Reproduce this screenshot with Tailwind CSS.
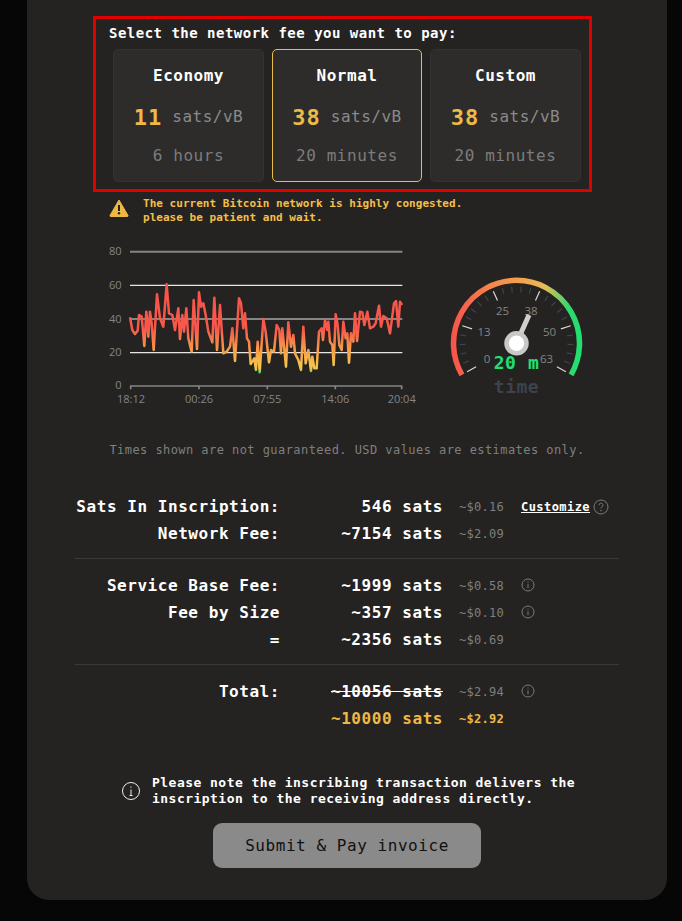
<!DOCTYPE html>
<html><head><meta charset="utf-8"><title>Fee</title>
<script src="https://cdn.jsdelivr.net/npm/@tailwindcss/browser@4"></script></head>
<body class="bg-[#060606] font-['DejaVu_Sans_Mono',monospace] overflow-hidden">
<div class="w-[682px] h-[921px] pl-[27px]">
<div class="w-[640px] h-[900px] bg-[#242322] rounded-b-[22px] pt-[16px] relative">

<div class="ml-[66px] w-[499px] h-[176px] border-[3px] border-[#e00000] pl-[14px] pt-[5px]">
  <p class="text-[14px] leading-[18px] font-bold tracking-[0.49px] text-white -ml-[1px]">Select the network fee you want to pay:</p>
  <div class="flex gap-[8px] mt-[7px] ml-[3px]">
    <div class="w-[151px] h-[133px] rounded-[5px] border border-[#333231] bg-[#2d2c2b] flex flex-col items-center pt-[16px]">
      <p class="text-[16px] leading-[20px] font-bold tracking-[0.5px] text-white">Economy</p>
      <p class="mt-[20px] flex items-center h-[22px] gap-[10px]"><span class="text-[22px] font-bold tracking-[1px] text-[#eeb945]">11</span><span class="text-[16px] tracking-[0.5px] text-[#8a8a8a]">sats/vB</span></p>
      <p class="mt-[18px] text-[16px] leading-[20px] tracking-[0.55px] text-[#7c7c7c]">6 hours</p>
    </div>
    <div class="w-[150px] h-[133px] rounded-[5px] border border-[#e9bd4c] bg-[#2d2c2b] flex flex-col items-center pt-[16px]">
      <p class="text-[16px] leading-[20px] font-bold tracking-[0.5px] text-white">Normal</p>
      <p class="mt-[20px] flex items-center h-[22px] gap-[10px]"><span class="text-[22px] font-bold tracking-[1px] text-[#eeb945]">38</span><span class="text-[16px] tracking-[0.5px] text-[#8a8a8a]">sats/vB</span></p>
      <p class="mt-[18px] text-[16px] leading-[20px] tracking-[0.55px] text-[#7c7c7c]">20 minutes</p>
    </div>
    <div class="w-[151px] h-[133px] rounded-[5px] border border-[#333231] bg-[#2d2c2b] flex flex-col items-center pt-[16px]">
      <p class="text-[16px] leading-[20px] font-bold tracking-[0.5px] text-white">Custom</p>
      <p class="mt-[20px] flex items-center h-[22px] gap-[10px]"><span class="text-[22px] font-bold tracking-[1px] text-[#eeb945]">38</span><span class="text-[16px] tracking-[0.5px] text-[#8a8a8a]">sats/vB</span></p>
      <p class="mt-[18px] text-[16px] leading-[20px] tracking-[0.55px] text-[#7c7c7c]">20 minutes</p>
    </div>
  </div>
</div>

<div class="flex items-start ml-[82px] mt-[5px] h-[28px] gap-[15px]">
  <svg width="20" height="18" viewBox="0 0 20 18" class="shrink-0 mt-[2px]"><path d="M10 1 L19 16.5 Q19.3 17.500 18 17.500 L2 17.500 Q.7 17.500 1 16.500 Z" fill="#eeb945" stroke="#eeb945" stroke-linejoin="round"/><rect x="9" y="6" width="2" height="6" fill="#242322"/><circle cx="10" cy="14.300" r="1.200" fill="#242322"/></svg>
  <p class="text-[11px] leading-[14px] font-bold tracking-[0.03px] text-[#f3bf4a] -ml-[1px] whitespace-nowrap">The current Bitcoin network is highly congested.<br>please be patient and wait.</p>
</div>

<div class="flex mt-[10px] ml-[68px] h-[175px]">
  <svg width="330" height="175" viewBox="0 0 990 525" class="shrink-0 font-['Open_Sans',sans-serif]">
    <defs><linearGradient id="lg" gradientUnits="userSpaceOnUse" x1="0" y1="150" x2="0" y2="415">
      <stop offset="0" stop-color="#f8544a"/><stop offset="0.5" stop-color="#f8584a"/><stop offset="0.72" stop-color="#f79a48"/><stop offset="0.9" stop-color="#f5c24a"/><stop offset="0.95" stop-color="#f5c24a"/><stop offset="1" stop-color="#1fe070"/>
    </linearGradient></defs>
    <g stroke-width="6"><path d="M105 50H922" stroke="#858585"/><path d="M105 252H922" stroke="#858585"/></g>
    <g stroke-width="4"><path d="M105 151H922" stroke="#e6e6e6"/><path d="M105 353H922" stroke="#e6e6e6"/></g>
    <path d="M105 453H922M107 453V463M312 453V463M517 453V463M721 453V463M920 453V463" stroke="#858585" stroke-width="5" fill="none"/>
    <polyline fill="none" stroke="url(#lg)" stroke-width="7.500" stroke-linejoin="round" points="105,247 112,285 120,297 128,287 132,240 140,245 148,333 154,230 160,305 165,230 170,265 176,345 186,178 195,250 205,275 215,148 222,235 232,240 240,285 250,220 255,312 262,240 267,290 274,220 280,310 290,350 296,195 306,342 312,172 318,215 325,205 332,240 340,290 352,322 358,188 366,345 375,210 385,355 395,350 405,335 412,280 420,378 432,190 438,205 445,280 450,235 456,310 462,320 467,387 478,370 483,405 488,320 494,412 505,252 512,290 522,382 528,345 537,350 545,270 553,285 558,355 562,280 573,395 580,262 588,335 595,300 600,355 610,375 618,405 625,275 632,385 640,345 648,408 652,365 658,400 665,400 672,290 680,280 684,315 690,255 697,285 700,260 705,320 712,330 716,390 722,238 728,270 733,330 740,345 745,260 752,310 757,295 762,383 768,295 775,320 780,235 786,318 795,230 802,232 808,270 817,230 825,280 835,275 842,265 852,212 858,275 865,243 875,250 885,295 897,205 903,198 910,275 915,200 921,210"/>
    <g fill="#858585" font-size="33" text-anchor="end"><text x="80" y="61">80</text><text x="80" y="162">60</text><text x="80" y="263">40</text><text x="80" y="363">20</text><text x="80" y="463">0</text></g>
    <g fill="#858585" font-size="33" text-anchor="middle"><text x="108" y="505">18:12</text><text x="312" y="505">00:26</text><text x="517" y="505">07:55</text><text x="721" y="505">14:06</text><text x="920" y="505">20:04</text></g>
  </svg>
  <div class="ml-[10px] mt-[30px] relative w-[160px] h-[135px]">
    <svg width="160" height="135" viewBox="0 0 160 135" class="font-['Open_Sans',sans-serif]">
      <defs><linearGradient id="gg" gradientUnits="userSpaceOnUse" x1="17" y1="0" x2="147" y2="0">
        <stop offset="0" stop-color="#f8544a"/><stop offset="0.32" stop-color="#f6884c"/><stop offset="0.58" stop-color="#f2a84f"/><stop offset="0.72" stop-color="#e4bc58"/><stop offset="0.9" stop-color="#2fd96e"/><stop offset="1" stop-color="#1fe070"/>
      </linearGradient></defs>
      <path d="M26.900 109.800 A63 63 0 1 1 136.100 109.800" fill="none" stroke="url(#gg)" stroke-width="5.500"/>
      <path fill="none" stroke="#3c4452" stroke-width="1.200" d="M28.100 98.200L33.700 96.100M25.500 89L31.400 87.800M24.500 79.500L30.500 79.400M25.100 70L31 70.900M31 51.900L36.300 54.700M36.100 43.800L40.900 47.400M42.500 36.700L46.600 41.100M50 30.800L53.300 35.800M67.300 23.100L68.800 28.900M76.700 21.500L77.200 27.500M86.300 21.500L85.800 27.500M95.700 23.100L94.200 28.900M113 30.800L109.700 35.800M120.500 36.700L116.400 41.100M126.900 43.800L122.100 47.400M132 51.900L126.700 54.700M137.900 70L132 70.900M138.500 79.500L132.500 79.400M137.500 89L131.600 87.800M134.900 98.200L129.300 96.100"/>
      <path fill="none" stroke="#d8d8d8" stroke-width="1.200" d="M32.100 106.800L41.100 101.650M27.300 60.700L37.100 63.900M58.300 26.200L62.500 35.600M104.700 26.200L100.500 35.600M135.700 60.700L125.900 63.900M130.900 106.800L121.900 101.650"/>
      <g fill="#858585" font-size="11.500" text-anchor="middle">
        <text x="52" y="98">0</text><text x="49" y="71">13</text><text x="67.500" y="50">25</text><text x="96" y="50">38</text><text x="114.500" y="71">50</text><text x="111.500" y="98">63</text>
      </g>
      <path d="M81.500 78 L94 50" stroke="#d0d0d0" stroke-width="5"/>
      <circle cx="81.500" cy="78.300" r="10" fill="#fff" stroke="#c8c8c8" stroke-width="4.500"/>
    </svg>
    <p class="absolute left-0 w-[163px] top-[87px] text-center text-[18px] leading-[22px] font-bold tracking-[0.6px] text-[#1fe070]">20 m</p>
    <p class="absolute left-0 w-[163px] top-[111px] text-center text-[18px] leading-[22px] font-bold tracking-[0.5px] text-[#3d424d]">time</p>
  </div>
</div>

<p class="text-center mt-[32px] w-[640px] text-[12px] leading-[16px] tracking-[0.44px] text-[#7f7f7f]">Times shown are not guaranteed. USD values are estimates only.</p>

<div class="ml-[48px] w-[544px] mt-[35px] text-[16px] tracking-[0.55px] font-bold text-white">
  <div class="flex items-center h-[27px]"><span class="w-[205px] text-right whitespace-nowrap">Sats In Inscription:</span><span class="w-[163px] text-right">546 sats</span><span class="w-[78px] pl-[16px] text-[12px] tracking-[0.28px] font-normal text-[#7f7f7f]">~$0.16</span><span class="text-[12px] tracking-[0.44px] underline">Customize</span>
    <svg class="ml-[3px]" width="16" height="16" viewBox="0 0 16 16" fill="none" stroke="#7a7a7a"><circle cx="8" cy="8" r="7"/><path d="M6 6.200a2 2 0 1 1 3 1.700c-.7.400-1 .8-1 1.600" /><circle cx="8" cy="11.700" r=".4"/></svg></div>
  <div class="flex items-center h-[27px]"><span class="w-[205px] text-right">Network Fee:</span><span class="w-[163px] text-right">~7154 sats</span><span class="w-[78px] pl-[16px] text-[12px] tracking-[0.28px] font-normal text-[#7f7f7f]">~$2.09</span></div>
  <div class="h-px bg-[#3a3938] mt-[11px] mb-[13px]"></div>
  <div class="flex items-center h-[27px]"><span class="w-[205px] text-right">Service Base Fee:</span><span class="w-[163px] text-right">~1999 sats</span><span class="w-[78px] pl-[16px] text-[12px] tracking-[0.28px] font-normal text-[#7f7f7f]">~$0.58</span>
    <svg class="-mt-[1px]" width="14" height="14" viewBox="0 0 14 14" fill="none" stroke="#7a7a7a"><circle cx="7" cy="7" r="6"/><path d="M7 6.200v4"/><path d="M7 3.600v1"/></svg></div>
  <div class="flex items-center h-[27px]"><span class="w-[205px] text-right">Fee by Size</span><span class="w-[163px] text-right">~357 sats</span><span class="w-[78px] pl-[16px] text-[12px] tracking-[0.28px] font-normal text-[#7f7f7f]">~$0.10</span>
    <svg class="-mt-[1px]" width="14" height="14" viewBox="0 0 14 14" fill="none" stroke="#7a7a7a"><circle cx="7" cy="7" r="6"/><path d="M7 6.200v4"/><path d="M7 3.600v1"/></svg></div>
  <div class="flex items-center h-[27px]"><span class="w-[205px] text-right">=</span><span class="w-[163px] text-right">~2356 sats</span><span class="w-[78px] pl-[16px] text-[12px] tracking-[0.28px] font-normal text-[#7f7f7f]">~$0.69</span></div>
  <div class="h-px bg-[#3a3938] mt-[11px] mb-[13px]"></div>
  <div class="flex items-center h-[27px]"><span class="w-[205px] text-right">Total:</span><span class="w-[163px] text-right line-through">~10056 sats</span><span class="w-[78px] pl-[16px] text-[12px] tracking-[0.28px] font-normal text-[#7f7f7f]">~$2.94</span>
    <svg class="-mt-[1px]" width="14" height="14" viewBox="0 0 14 14" fill="none" stroke="#7a7a7a"><circle cx="7" cy="7" r="6"/><path d="M7 6.200v4"/><path d="M7 3.600v1"/></svg></div>
  <div class="flex items-center h-[27px]"><span class="w-[205px]"></span><span class="w-[163px] text-right text-[#eeb945]">~10000 sats</span><span class="w-[78px] pl-[16px] text-[12px] tracking-[0.28px] text-[#eeb945]">~$2.92</span></div>
</div>

<div class="flex items-center ml-[94px] mt-[43px] gap-[11px]">
  <svg width="20" height="20" viewBox="0 0 20 20" fill="none" stroke="#eee" class="shrink-0"><circle cx="10" cy="10" r="8.500"/><path d="M10 8.500v6M8.500 14.500h3"/><path d="M10 5.500v1.200"/></svg>
  <p class="text-[13px] leading-[16px] font-bold tracking-[0.47px] text-white whitespace-nowrap">Please note the inscribing transaction delivers the<br>inscription to the receiving address directly.</p>
</div>

<div class="mt-[16px] ml-[186px] w-[268px] h-[45px] rounded-[9px] bg-[#8a8a8a] flex items-center justify-center text-[16px] tracking-[0.55px] text-[#111]">Submit &amp; Pay invoice</div>

</div></div>
</body></html>
